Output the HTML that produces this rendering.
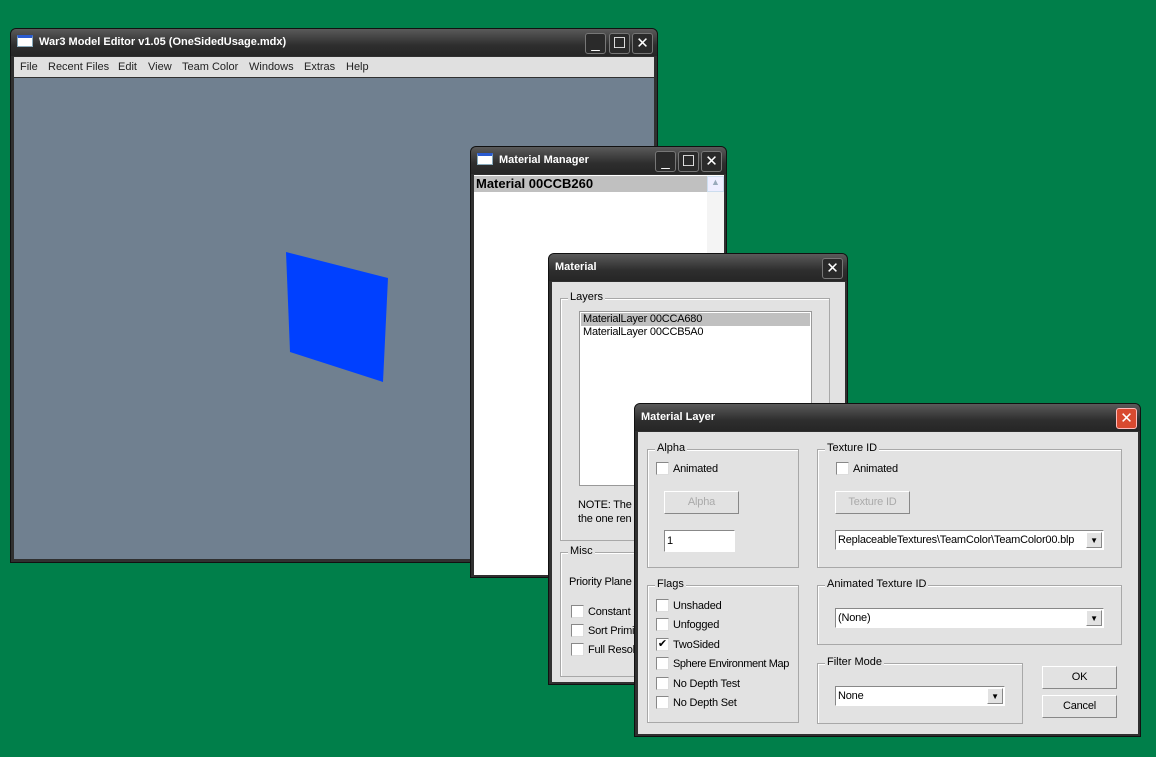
<!DOCTYPE html>
<html><head><meta charset="utf-8"><style>
*{box-sizing:border-box;margin:0;padding:0}
body{width:1156px;height:757px;background:#007f4a;position:relative;overflow:hidden;font-family:"Liberation Sans",sans-serif;font-size:11px;color:#000}
.a{position:absolute}
.win{position:absolute;background:#303030;border:1px solid #111;border-radius:6px 6px 0 0}
.tb{position:absolute;left:0;right:0;top:0;height:27px;background:linear-gradient(#5a5a5a,#2e2e2e 60%,#262626);border-radius:5px 5px 0 0;color:#fff;font-weight:bold;font-size:11px;line-height:27px;padding-left:6px}
.btn{position:absolute;top:4px;width:21px;height:21px;border:1px solid #777;border-radius:3px;background:#2a2a2a;color:#fff;text-align:center;line-height:19px;font-size:15px;font-weight:normal}
.body{position:absolute;background:#e2e2e2}
.body .a,.body .pb,.body .in{letter-spacing:-0.2px}
.grp{position:absolute;border:1px solid #a8a8a8;box-shadow:1px 1px 0 #fff inset}
.grp>.l{position:absolute;top:-8px;left:7px;background:#e2e2e2;padding:0 2px;font-size:11px}
.cb{position:absolute;width:13px;height:13px;background:#fff;border:1px solid #888;border-right-color:#ddd;border-bottom-color:#ddd}
.pb{position:absolute;border:1px solid #fff;border-right-color:#888;border-bottom-color:#888;background:#e2e2e2;text-align:center;line-height:20px}
.in{position:absolute;background:#fff;border:1px solid #888;border-right-color:#fff;border-bottom-color:#fff;padding-left:2px;line-height:18px}
.dd{position:absolute;right:1px;top:1px;bottom:1px;width:16px;background:#e2e2e2;border:1px solid #fff;border-right-color:#888;border-bottom-color:#888;font-size:8px;text-align:center;line-height:15px}
.icon{display:inline-block;width:16px;height:12px;background:#fff;border:1px solid #8ab;border-top:3px solid #2a5bd0;vertical-align:middle;margin-right:6px;margin-top:-3px}
</style></head><body>

<div class="win" style="left:10px;top:28px;width:648px;height:535px">
 <div class="tb"><span class="icon"></span>War3 Model Editor v1.05 (OneSidedUsage.mdx)
  <div class="btn" style="left:574px">_</div><div class="btn" style="left:598px">☐</div><div class="btn" style="left:621px">✕</div></div>
 <div class="a" style="left:3px;top:28px;width:640px;height:20px;background:#e0e0e0;line-height:20px;color:#222">
  <span class="a" style="left:6px">File</span><span class="a" style="left:34px">Recent Files</span><span class="a" style="left:104px">Edit</span><span class="a" style="left:134px">View</span><span class="a" style="left:168px">Team Color</span><span class="a" style="left:235px">Windows</span><span class="a" style="left:290px">Extras</span><span class="a" style="left:332px">Help</span></div>
 <div class="a" style="left:3px;top:49px;width:640px;height:481px;background:#708090"></div>
</div>
<svg class="a" style="left:0;top:0" width="1156" height="757"><polygon points="286,252 388,278 383,382 290,352" fill="#0040ff"/></svg>

<div class="win" style="left:470px;top:146px;width:257px;height:432px">
 <div class="tb"><span class="icon"></span>Material Manager
  <div class="btn" style="left:184px">_</div><div class="btn" style="left:207px">☐</div><div class="btn" style="left:230px">✕</div></div>
 <div class="a" style="left:3px;top:28px;width:250px;height:400px;background:#fff"></div>
 <div class="a" style="left:3px;top:29px;width:233px;height:16px;background:#c0c0c0;font-weight:bold;font-size:13px;line-height:16px;padding-left:2px">Material 00CCB260</div>
 <div class="a" style="left:236px;top:29px;width:17px;height:16px;background:#eef;border:1px solid #cde;color:#9ab;text-align:center;font-size:9px">▲</div>
 <div class="a" style="left:236px;top:45px;width:17px;height:383px;background:#f4f4f4"></div>
</div>

<div class="win" style="left:548px;top:253px;width:300px;height:432px">
 <div class="tb">Material<div class="btn" style="left:273px">✕</div></div>
 <div class="body" style="left:3px;top:28px;width:293px;height:400px">
  <div class="grp" style="left:8px;top:16px;width:270px;height:243px"><span class="l">Layers</span></div>
  <div class="a" style="left:27px;top:29px;width:233px;height:175px;background:#fff;border:1px solid #999"></div>
  <div class="a" style="left:29px;top:31px;width:229px;height:13px;background:#c0c0c0;line-height:13px;padding-left:2px">MaterialLayer 00CCA680</div>
  <div class="a" style="left:31px;top:44px;line-height:13px">MaterialLayer 00CCB5A0</div>
  <div class="a" style="left:26px;top:216px;line-height:14px">NOTE: The<br>the one ren</div>
  <div class="grp" style="left:8px;top:270px;width:270px;height:125px"><span class="l">Misc</span></div>
  <div class="a" style="left:17px;top:294px">Priority Plane</div>
  <div class="cb" style="left:19px;top:323px"></div><div class="a" style="left:36px;top:324px">Constant</div>
  <div class="cb" style="left:19px;top:342px"></div><div class="a" style="left:36px;top:343px">Sort Primi</div>
  <div class="cb" style="left:19px;top:361px"></div><div class="a" style="left:36px;top:362px">Full Resol</div>
 </div>
</div>

<div class="win" style="left:634px;top:403px;width:507px;height:334px">
 <div class="tb">Material Layer<div class="btn" style="left:481px;background:#d84a30;border-color:#fbb">✕</div></div>
 <div class="body" style="left:3px;top:28px;width:500px;height:302px">
  <div class="grp" style="left:9px;top:17px;width:152px;height:119px"><span class="l">Alpha</span></div>
  <div class="cb" style="left:18px;top:30px"></div><div class="a" style="left:35px;top:31px">Animated</div>
  <div class="pb" style="left:26px;top:59px;width:75px;height:23px;color:#aaa">Alpha</div>
  <div class="in" style="left:26px;top:98px;width:71px;height:22px;line-height:20px">1</div>

  <div class="grp" style="left:179px;top:17px;width:305px;height:119px"><span class="l">Texture ID</span></div>
  <div class="cb" style="left:198px;top:30px"></div><div class="a" style="left:215px;top:31px">Animated</div>
  <div class="pb" style="left:197px;top:59px;width:75px;height:23px;color:#aaa">Texture ID</div>
  <div class="in" style="left:197px;top:98px;width:269px;height:20px">ReplaceableTextures\TeamColor\TeamColor00.blp<div class="dd">▼</div></div>

  <div class="grp" style="left:9px;top:153px;width:152px;height:138px"><span class="l">Flags</span></div>
  <div class="cb" style="left:18px;top:167px"></div><div class="a" style="left:35px;top:168px">Unshaded</div>
  <div class="cb" style="left:18px;top:186px"></div><div class="a" style="left:35px;top:187px">Unfogged</div>
  <div class="cb" style="left:18px;top:206px;font-size:11px;line-height:10px;text-align:center">✔</div><div class="a" style="left:35px;top:207px">TwoSided</div>
  <div class="cb" style="left:18px;top:225px"></div><div class="a" style="left:35px;top:226px;letter-spacing:-0.4px">Sphere Environment Map</div>
  <div class="cb" style="left:18px;top:245px"></div><div class="a" style="left:35px;top:246px">No Depth Test</div>
  <div class="cb" style="left:18px;top:264px"></div><div class="a" style="left:35px;top:265px">No Depth Set</div>

  <div class="grp" style="left:179px;top:153px;width:305px;height:60px"><span class="l">Animated Texture ID</span></div>
  <div class="in" style="left:197px;top:176px;width:269px;height:20px">(None)<div class="dd">▼</div></div>

  <div class="grp" style="left:179px;top:231px;width:206px;height:61px"><span class="l">Filter Mode</span></div>
  <div class="in" style="left:197px;top:254px;width:170px;height:20px">None<div class="dd">▼</div></div>

  <div class="pb" style="left:404px;top:234px;width:75px;height:23px">OK</div>
  <div class="pb" style="left:404px;top:263px;width:75px;height:23px">Cancel</div>
 </div>
</div>
</body></html>
